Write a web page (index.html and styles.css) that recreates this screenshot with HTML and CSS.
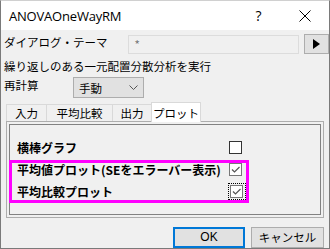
FILE: index.html
```html
<!DOCTYPE html>
<html>
  <head>
    <title>ANOVAOneWayRM</title>
    <meta charset="utf-8" />
    <link rel="stylesheet" href="styles.css">
  </head>
  <body>
    <div class="window">
      <div class="titlebar">
        <span class="title">ANOVAOneWayRM</span>
        <span class="help">?</span>
        <span class="close">
          <svg width="12" height="12" viewBox="0 0 12 12"><path d="M0.5 0.5 L11.5 11.5 M11.5 0.5 L0.5 11.5" stroke="#000" stroke-width="1" fill="none"/></svg>
        </span>
      </div>
      <div class="body">
        <div class="row theme">
          <span class="label">ダイアログ・テーマ</span>
          <span class="field">*</span>
          <span class="arrowbtn">
            <svg width="7" height="10" viewBox="0 0 7 10"><path d="M0 0 L7 5 L0 10 Z" fill="#000"/></svg>
          </span>
        </div>
        <div class="desc">繰り返しのある一元配置分散分析を実行</div>
        <div class="row recalc">
          <span class="label">再計算</span>
          <span class="combo">手動
            <svg width="9" height="5" viewBox="0 0 9 5"><path d="M0.5 0.5 L4.5 4.5 L8.5 0.5" stroke="#555" fill="none"/></svg>
          </span>
        </div>
        <div class="tabs">
          <span class="tab t1">入力</span>
          <span class="tab t2">平均比較</span>
          <span class="tab t3">出力</span>
          <span class="tab active">プロット</span>
        </div>
        <div class="panel">
          <div class="group">
            <div class="opt first">
              <span class="optlabel">横棒グラフ</span>
              <span class="check"></span>
            </div>
            <div class="opt second">
              <span class="optlabel">平均値プロット(SEをエラーバー表示)</span>
              <span class="check on">
                <svg width="11" height="11" viewBox="0 0 11 11"><path d="M2 5.5 L4.5 8 L9.5 3" stroke="#555" stroke-width="1.2" fill="none"/></svg>
              </span>
            </div>
            <div class="opt">
              <span class="optlabel">平均比較プロット</span>
              <span class="focus">
                <span class="check on">
                  <svg width="11" height="11" viewBox="0 0 11 11"><path d="M2 5.5 L4.5 8 L9.5 3" stroke="#555" stroke-width="1.2" fill="none"/></svg>
                </span>
              </span>
            </div>
            <div class="highlight"></div>
          </div>
        </div>
        <div class="buttons">
          <span class="btn ok">OK</span>
          <span class="btn">キャンセル</span>
        </div>
      </div>
    </div>
  </body>
</html>
```

FILE: styles.css
```css
body {
    margin: 0;
    background: #f0f0f0;
    font-family: "Noto Sans CJK JP", "Noto Sans", sans-serif;
    font-size: 11.5px;
    color: #000; }

.window {
    width: 330px;
    height: 249px;
    box-sizing: border-box;
    border: 1px solid #7a7a7a;
    border-top-color: #d0d0d0;
    display: flex;
    flex-direction: column; }

.titlebar {
    height: 30px;
    background: #fff;
    display: flex;
    align-items: center; }
.titlebar .title {
    font-family: "Open Sans", "Noto Sans", sans-serif;
    font-size: 13px;
    padding-left: 8px;
    padding-top: 1px;
    letter-spacing: -0.2px;
    flex: 1; }
.titlebar .help {
    font-family: "Open Sans", sans-serif;
    font-size: 14px;
    width: 47px;
    text-align: center; }
.titlebar .close {
    width: 46px;
    display: flex;
    justify-content: center;
    padding-right: 1px; }

.body {
    flex: 1;
    background: #f0f0f0;
    display: flex;
    flex-direction: column; }

.row {
    display: flex;
    align-items: center; }
.row .label {
    padding-left: 3px; }

.theme {
    margin-top: 4px;
    height: 20px; }
.theme .label {
    width: 124px;
    align-self: flex-start;
    line-height: 16px; }
.theme .field {
    width: 164px;
    height: 17px;
    border: 1px solid #dcdcdc;
    background: #f0f0f0;
    color: #777;
    line-height: 17px;
    padding-left: 6px;
    margin-top: 1px; }
.theme .arrowbtn {
    margin-left: 5px;
    width: 23px;
    height: 18px;
    border: 1px solid #adadad;
    background: #e1e1e1;
    display: flex;
    align-items: center;
    justify-content: center; }

.desc {
    padding-left: 3px;
    margin-top: 4px;
    height: 16px;
    line-height: 16px; }

.recalc {
    margin-top: 3px;
    height: 21px; }
.recalc .label {
    width: 69px;
    align-self: flex-start;
    line-height: 16px; }
.combo {
    border: 1px solid #adadad;
    background: #e1e1e1;
    display: flex;
    align-items: center;
    justify-content: space-between;
    padding: 0 5px 0 5px;
    box-sizing: border-box;
    width: 71px;
    height: 21px; }

.tabs {
    margin-top: 4px;
    height: 19px;
    display: flex;
    align-items: flex-end;
    padding-left: 5px; }
.tab {
    height: 16px;
    line-height: 16px;
    text-align: center;
    border: 1px solid #d9d9d9;
    border-bottom: none;
    border-right: none;
    background: #f0f0f0; }
.tab.t1 { width: 39px; }
.tab.t2 { width: 65px; }
.tab.t3 { width: 38px; }
.tab.active {
    width: 48px;
    height: 19px;
    line-height: 20px;
    background: #fff;
    border-right: 1px solid #d9d9d9;
    position: relative;
    z-index: 1;
    margin-bottom: -1px; }

.panel {
    margin-left: 5px;
    width: 318px;
    height: 97px;
    box-sizing: border-box;
    border: 1px solid #adadad;
    padding: 2px; }
.group {
    position: relative;
    height: 100%;
    box-sizing: border-box;
    border: 1px solid #828282;
    padding-left: 7px; }

.opt {
    display: flex;
    align-items: center;
    height: 21px;
    font-size: 12px;
    font-weight: bold; }
.opt.first {
    margin-top: 11px;
    height: 22px; }
.opt.second {
    height: 23px; }
.optlabel {
    width: 212px; }
.check {
    width: 11px;
    height: 11px;
    border: 1px solid #333;
    background: #fff;
    display: flex; }
.check.on {
    border-color: #777; }
.focus {
    margin-left: -1px;
    padding: 1px 2px 1px 1px;
    border: 1px dotted #000;
    display: flex; }

.highlight {
    position: absolute;
    left: -1px;
    top: 35px;
    width: 234px;
    height: 37px;
    border: 3px solid #ff00ff; }

.buttons {
    display: flex;
    justify-content: flex-end;
    margin-top: 9px;
    padding-right: 5px;
    gap: 6px; }
.btn {
    width: 71px;
    height: 19px;
    line-height: 19px;
    text-align: center;
    border: 1px solid #adadad;
    background: #e1e1e1; }
.btn.ok {
    border: 2px solid #0078d7;
    width: 68px;
    height: 17px;
    line-height: 17px;
    font-family: "Liberation Sans", sans-serif;
    font-size: 12px; }
```
